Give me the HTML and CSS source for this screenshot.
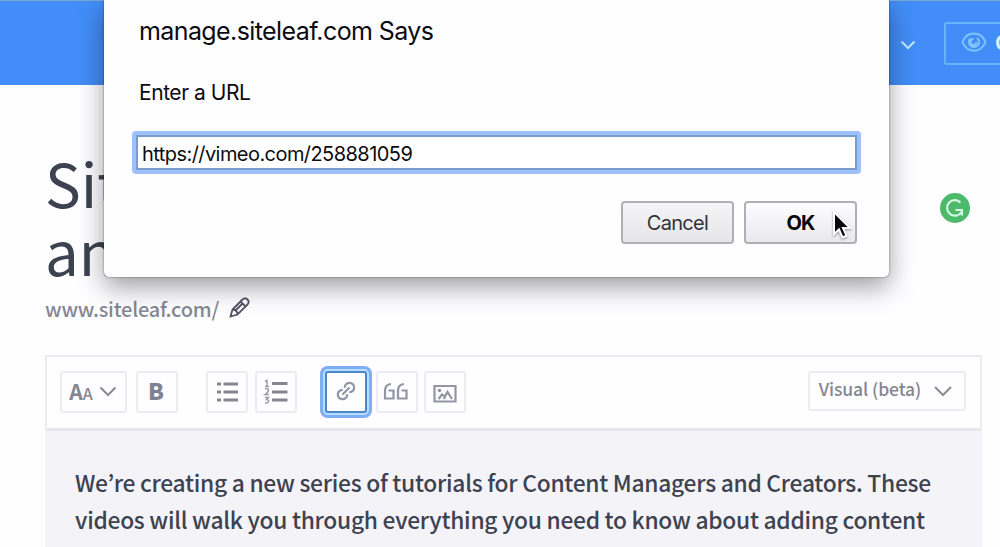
FILE: index.html
```html
<!DOCTYPE html>
<html lang="en">
<head>
<meta charset="utf-8">
<title>Siteleaf</title>
<link rel="stylesheet" href="styles.css">
</head>
<body>
<div class="app">
  <header class="topbar">
    <svg class="topbar-chevron" width="16" height="10" viewBox="0 0 16 10"><path d="M1.500 1.500 8 8l6.500-6.500"/></svg>
    <div class="preview-button">
      <svg class="eye" width="26" height="20" viewBox="0 0 26 20"><path d="M1.500 10C6-1.500 20-1.500 24.500 10 20 21.500 6 21.500 1.500 10Z"/><path d="M9.500 6.500A5 5 0 1 0 16 6M12.500 7A3 3 0 1 0 15.500 10"/></svg>
      <span>Open</span>
    </div>
  </header>
  <main class="page">
    <h1 class="title"><span>Sit</span><span>an</span></h1>
    <div class="permalink">
      <span>www.siteleaf.com/</span>
      <svg class="pencil" width="21" height="21" viewBox="0 0 21 21"><path d="M1.500 19.500 3.500 12.500 13 3Q16 0 18.500 2.500T18 8L8.500 17.500ZM3.500 12.500Q8 12.500 8.500 17.500M11.500 4.500 16.500 9.500M6.500 13.500 13.500 6.500"/></svg>
    </div>
    <section class="editor">
      <div class="toolbar">
        <div class="tool tool-style"><span class="type-icon">A<small>A</small></span><svg class="chevron" width="18" height="11" viewBox="0 0 18 11"><path d="M1.500 1.500 9 9l7.500-7.500"/></svg></div>
        <div class="tool tool-bold"><span>B</span></div>
        <div class="tool tool-list"><svg width="24" height="22" viewBox="0 0 24 22"><path class="bars" d="M2 3h4M8.500 3H23M2 11h4M8.500 11H23M2 19h4M8.500 19H23"/></svg></div>
        <div class="tool tool-ordered"><svg width="26" height="26" viewBox="0 0 26 26"><path class="bars" d="M9 4.500h15.500M9 13h15.500M9 21h15.500"/><path class="digits" d="M2 2.500 4 1.500v6M2 7.500h4M2 10q3.500-1 3.500 1T2 15.500h4M2 18.500h3.500l-2 2q2.500 0 2 2T2 24"/></svg></div>
        <div class="tool tool-link"><svg width="22" height="22" viewBox="0 0 22 22"><path class="line" d="M9.800 7.800A4.700 4.700 0 1 1 14.300 12.200M12.200 14.200A4.700 4.700 0 1 1 7.700 9.800M7.500 14.500l7-7"/></svg></div>
        <div class="tool tool-quote"><svg width="26" height="20" viewBox="0 0 26 20"><path class="line" d="M8 2Q2 2.500 2 9v7.500h8.500V8.500H5.500M21 2q-6 .5-6 7v7.500h8.500V8.500H18.500"/></svg></div>
        <div class="tool tool-image"><svg width="24" height="20" viewBox="0 0 24 20"><path class="line" d="M1.500 2h21v15.500h-21Z"/><circle class="dot" cx="6.500" cy="6.500" r="1.700"/><path class="line" d="M5.500 15 9 10.500l3 2L14.500 8l4.500 7M11 15l1-2.500"/></svg></div>
        <div class="tool tool-mode"><span>Visual (beta)</span><svg class="chevron" width="20" height="12" viewBox="0 0 20 12"><path d="M2 2l8 8 8-8"/></svg></div>
      </div>
      <div class="content"><span class="line-one">We’re creating a new series of tutorials for Content Managers and Creators. These</span><span class="line-two">videos will walk you through everything you need to know about adding content</span></div>
    </section>
  </main>
  <svg class="grammar-badge" width="30" height="30" viewBox="0 0 30 30"><circle cx="15" cy="15" r="15"/><path d="M20.500 9.500A7.800 7.800 0 1 0 21.500 19M15.500 17h6.500v5.500"/></svg>
  <div class="dialog">
    <div class="dialog-title">manage.siteleaf.com Says</div>
    <div class="dialog-message">Enter a URL</div>
    <div class="dialog-input">https://vimeo.com/258881059</div>
    <div class="dialog-actions">
      <div class="button cancel">Cancel</div>
      <div class="button ok">OK</div>
    </div>
  </div>
  <svg class="cursor" width="20" height="32" viewBox="0 0 20 32"><path d="M2 2v22l5-4.500 3.500 8 4-1.800-3.500-7.700h7Z"/></svg>
</div>
</body>
</html>
```
FILE: styles.css
```css
* { box-sizing: border-box; }
body { margin: 0; background: #fefdff; }
svg { display: block; fill: none; flex: none; }
.app {
  position: relative;
  width: 1000px;
  height: 547px;
  overflow: hidden;
  font-family: "Noto Sans CJK KR", "Open Sans", sans-serif;
  color: #3d4250;
  white-space: nowrap;
}
.topbar {
  height: 85px;
  padding: 21px 0 0 900px;
  display: flex;
  background: #428df7;
  border-top: 1px solid #7ba6cf;
}
.topbar-chevron { margin-top: 18px; stroke: #bfe7ff; stroke-width: 2; }
.preview-button {
  flex: none;
  width: 120px;
  height: 43px;
  margin-left: 28px;
  padding-left: 15px;
  display: flex;
  align-items: center;
  gap: 8px;
  border: 2px solid #68b4fb;
  border-radius: 3px;
  color: #d8f3ff;
  font-size: 20px;
  font-weight: 700;
}
.preview-button span { margin-top: -4px; }
.eye { stroke: #7fc6fc; stroke-width: 2; margin-top: -4px; }
.page { padding: 63px 18px 0 45px; }
.title { margin: 0; height: 138px; font-size: 60px; font-weight: 400; line-height: 68px; }
.title span { display: block; }
.permalink {
  height: 44px;
  display: flex;
  align-items: center;
  gap: 10px;
  font-size: 20px;
  font-weight: 500;
  letter-spacing: -0.2px;
  color: #858892;
}
.pencil { stroke: #505362; stroke-width: 1.8; margin-top: -2px; }
.editor { margin-top: 25px; border: 2px solid #ececf0; border-bottom: 0; }
.toolbar {
  height: 74px;
  padding: 14px 14px 0 13px;
  display: flex;
  align-items: flex-start;
  border-bottom: 3px solid #e7e6ea;
  color: #85868f;
}
.tool {
  width: 42px;
  height: 42px;
  display: flex;
  align-items: center;
  justify-content: center;
  border: 2px solid #ececf1;
  border-radius: 3px;
}
.tool-style { width: 67px; gap: 6px; padding-right: 1px; }
.tool-style .chevron { margin-top: -2px; }
.type-icon { font-size: 21px; font-weight: 700; line-height: 30px; }
.type-icon small { font-size: 16px; font-weight: 500; }
.chevron { stroke: #898a94; stroke-width: 2; }
.tool-bold { margin-left: 9px; font-size: 23px; font-weight: 900; color: #7d8293; line-height: 30px; }
.tool-bold span { margin: -4px 2px 0 0; }
.tool-list { margin-left: 28px; }
.tool-ordered { margin-left: 7px; }
.tool-link {
  margin-left: 28px;
  border-color: #4c86c8;
  box-shadow: 0 0 0 2px #b5e0ff, 0 0 0 5px #80aef6;
}
.tool-link svg { margin-top: -2px; }
.tool-quote { margin-left: 9px; }
.tool-quote svg { margin-right: 2px; }
.tool-image { margin-left: 6px; }
.tool-image svg { margin-top: 3px; }
.tool-mode { margin-left: auto; width: 158px; height: 40px; gap: 12px; padding-right: 2px; font-size: 17.5px; font-weight: 500; letter-spacing: -0.1px; }
.tool-mode span { margin-top: -5px; }
.bars { stroke: #85858e; stroke-width: 2.8; }
.digits { stroke: #999aa3; stroke-width: 1.4; }
.line { stroke: #9295a3; stroke-width: 2.2; }
.dot { fill: #8c8f9e; }
.content {
  height: 130px;
  margin: 0 -2px;
  padding: 33px 0 0 30px;
  background: #f4f3f8;
  font-size: 22.8px;
  font-weight: 500;
  line-height: 37px;
  letter-spacing: -0.28px;
}
.content span { display: block; }
.grammar-badge { position: absolute; left: 940px; top: 193px; fill: #4cba6a; }
.grammar-badge path { fill: none; stroke: #d8f8e6; stroke-width: 2.2; }
.dialog {
  position: absolute;
  left: 104px;
  top: 0;
  width: 785px;
  height: 277px;
  padding: 12px 28px 0;
  background: #fefdff;
  border-radius: 0 0 5px 5px;
  box-shadow: 0 0 2px rgba(0, 0, 0, .55), 0 10px 26px rgba(0, 0, 0, .38);
  font-family: Inter, Roboto, sans-serif;
  color: #0b0b10;
}
.dialog-title { height: 38px; padding-left: 7px; font-size: 25px; line-height: 38px; letter-spacing: -0.6px; }
.dialog-message { height: 30px; margin-top: 27px; padding-left: 7px; font-size: 21px; line-height: 32px; letter-spacing: -0.45px; }
.dialog-input {
  height: 43px;
  margin-top: 24px;
  padding-left: 6px;
  border: 4px solid #9dc1fb;
  border-radius: 4px;
  box-shadow: inset 0 0 0 2px #799bce;
  background: #fff;
  font-size: 20px;
  line-height: 38px;
  letter-spacing: -0.56px;
  width: 729px;
}
.dialog-actions { display: flex; justify-content: flex-end; gap: 10px; margin-top: 27px; padding-right: 4px; }
.button {
  width: 113px;
  height: 43px;
  border: 2px solid #b0afb3;
  border-radius: 4px;
  background: linear-gradient(#f5f4f7, #e6e5e8);
  font-size: 20px;
  line-height: 40px;
  text-align: center;
  letter-spacing: -0.7px;
  color: #303139;
}
.ok { color: #07070b; font-weight: 700; letter-spacing: -0.8px; background: linear-gradient(#fdfcff, #e9e8eb); }
.cursor { position: absolute; left: 832px; top: 210px; fill: #09090d; stroke: #fff; stroke-width: 2; filter: drop-shadow(0 1px 1px rgba(0, 0, 0, .4)); }
```
